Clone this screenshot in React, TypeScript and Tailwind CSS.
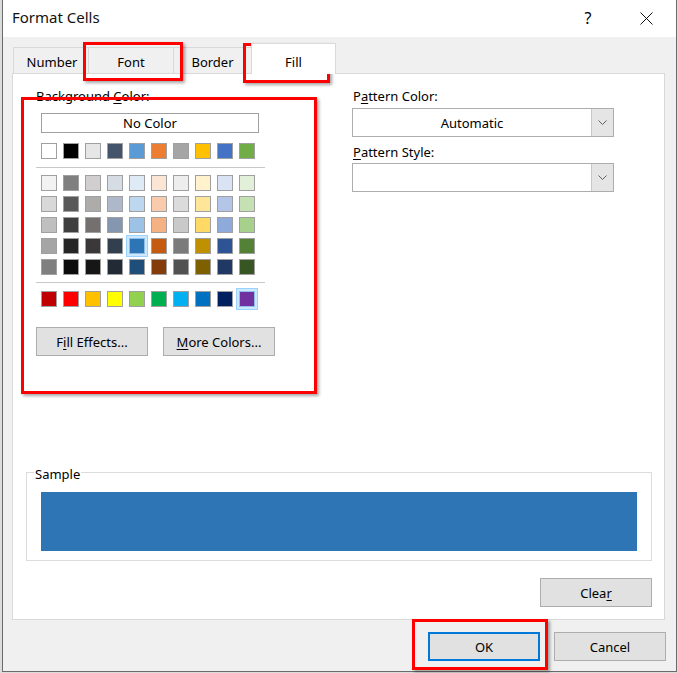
import React from 'react';

const themeRow = [
  'bg-[#ffffff]', 'bg-[#000000]', 'bg-[#e7e6e6]', 'bg-[#44546a]', 'bg-[#5b9bd5]',
  'bg-[#ed7d31]', 'bg-[#a5a5a5]', 'bg-[#ffc000]', 'bg-[#4472c4]', 'bg-[#70ad47]',
];

const tintRows = [
  ['bg-[#f2f2f2]', 'bg-[#7f7f7f]', 'bg-[#d0cece]', 'bg-[#d6dce4]', 'bg-[#deebf6]', 'bg-[#fbe5d5]', 'bg-[#ededed]', 'bg-[#fff2cc]', 'bg-[#dae3f3]', 'bg-[#e2efd9]'],
  ['bg-[#d8d8d8]', 'bg-[#595959]', 'bg-[#aeabab]', 'bg-[#adb9ca]', 'bg-[#bdd7ee]', 'bg-[#f7cbac]', 'bg-[#dbdbdb]', 'bg-[#fee599]', 'bg-[#b4c6e7]', 'bg-[#c5e0b3]'],
  ['bg-[#bfbfbf]', 'bg-[#3f3f3f]', 'bg-[#757070]', 'bg-[#8496b0]', 'bg-[#9cc3e5]', 'bg-[#f4b183]', 'bg-[#c9c9c9]', 'bg-[#ffd965]', 'bg-[#8eaadb]', 'bg-[#a8d08d]'],
  ['bg-[#a5a5a5]', 'bg-[#262626]', 'bg-[#3a3838]', 'bg-[#323f4f]', 'bg-[#2e75b5]', 'bg-[#c55a11]', 'bg-[#7b7b7b]', 'bg-[#bf9000]', 'bg-[#2f5496]', 'bg-[#538135]'],
  ['bg-[#7f7f7f]', 'bg-[#0c0c0c]', 'bg-[#171616]', 'bg-[#222a35]', 'bg-[#1e4e79]', 'bg-[#843c0b]', 'bg-[#525252]', 'bg-[#7f6000]', 'bg-[#1f3864]', 'bg-[#375623]'],
];

const standardRow = [
  'bg-[#c00000]', 'bg-[#ff0000]', 'bg-[#ffc000]', 'bg-[#ffff00]', 'bg-[#92d050]',
  'bg-[#00b050]', 'bg-[#00b0f0]', 'bg-[#0070c0]', 'bg-[#002060]', 'bg-[#7030a0]',
];

function Swatch({ color, highlight }: { color: string; highlight?: boolean }) {
  if (highlight) {
    return (
      <span className="relative block w-[16px] h-[16px]">
        <span className="absolute -inset-[3px] border border-[#99d1ff] bg-[#cce8ff]" />
        <span className={`relative block w-[16px] h-[16px] border border-[#8fbfe8] ${color}`} />
      </span>
    );
  }
  return <span className={`block w-[16px] h-[16px] border border-[#a0a0a0] ${color}`} />;
}

function SwatchRow({ colors, selected }: { colors: string[]; selected?: number }) {
  return (
    <div className="flex gap-[6px]">
      {colors.map((c, i) => (
        <Swatch key={i} color={c} highlight={i === selected} />
      ))}
    </div>
  );
}

function Combo({ value }: { value?: string }) {
  return (
    <div className="flex w-[262px] h-[29px] border border-[#adadad] bg-white">
      <div className="flex-1 flex items-center justify-center">{value}</div>
      <div className="w-[22px] flex items-center justify-center bg-[#e5e5e5] border-l border-[#c8c8c8]">
        <svg width="9" height="5" viewBox="0 0 9 5">
          <polyline points="0.5,0.5 4.5,4.5 8.5,0.5" fill="none" stroke="#606060" strokeWidth="1" />
        </svg>
      </div>
    </div>
  );
}

function Button({ children, primary }: { children: React.ReactNode; primary?: boolean }) {
  return (
    <div
      className={`w-[112px] h-[29px] flex items-center justify-center bg-[#e1e1e1] ${
        primary ? 'border-2 border-[#0078d7]' : 'border border-[#adadad]'
      }`}
    >
      {children}
    </div>
  );
}

function RedBox({ className }: { className: string }) {
  return (
    <div
      className={`absolute border-[3px] border-[#ff0000] shadow-[2px_2px_3px_rgba(0,0,0,0.35)] pointer-events-none ${className}`}
    />
  );
}

export default function App() {
  return (
    <div className="relative w-[678px] h-[673px] overflow-hidden bg-[#dcdcdc] font-['Noto_Sans',sans-serif] text-[13px] leading-[16px] text-black">
      <div className="ml-[2px] w-[675px] h-[672px] flex flex-col bg-[#f0f0f0] border-x border-b border-[#6b6b6b]">
        {/* title bar */}
        <div className="h-[37px] bg-white flex items-center pl-[9px] pr-[23px]">
          <span className="text-[15px] leading-[20px] mb-[3px] text-[#111]">Format Cells</span>
          <span className="ml-auto w-[20px] text-center text-[16px] leading-[20px] mb-[2px]">?</span>
          <span className="ml-[41px] w-[14px] h-[14px] flex items-center justify-center">
            <svg width="13" height="13" viewBox="0 0 13 13">
              <path d="M0.5 0.5 L12.5 12.5 M12.5 0.5 L0.5 12.5" stroke="#111" strokeWidth="1" />
            </svg>
          </span>
        </div>

        {/* tabs */}
        <div className="h-[36px] flex items-end pl-[10px]">
          <div className="w-[75px] h-[26px] flex items-center justify-center pt-[2px] pl-[2px] border-t border-l border-[#d9d9d9]">
            Number
          </div>
          <div className="w-[85px] h-[26px] flex items-center justify-center pt-[2px] border-t border-l border-[#d9d9d9]">
            Font
          </div>
          <div className="w-[78px] h-[26px] flex items-center justify-center pt-[2px] border-t border-l border-[#d9d9d9]">
            Border
          </div>
          <div className="relative z-10 -mb-px w-[85px] h-[31px] flex items-start justify-center pt-[10px] bg-white border-t border-x border-[#d9d9d9]">
            Fill
          </div>
        </div>

        {/* tab panel */}
        <div className="ml-[9px] w-[653px] h-[547px] flex flex-col bg-white border border-[#d9d9d9]">
          <div className="flex">
            <div className="w-[339px] pl-[23px] pt-[14px] flex flex-col">
              <div>
                Background <u className="underline-offset-2">C</u>olor:
              </div>
              <div className="ml-[5px] mt-[9px] w-[218px] h-[20px] flex items-center justify-center border border-[#a0a0a0]">
                No Color
              </div>
              <div className="ml-[5px] mt-[10px]">
                <SwatchRow colors={themeRow} />
              </div>
              <div className="mt-[8px] w-[229px] h-px bg-[#c8c8c8]" />
              <div className="ml-[5px] mt-[7px] flex flex-col gap-[5px]">
                {tintRows.map((row, i) => (
                  <SwatchRow key={i} colors={row} selected={i === 3 ? 4 : undefined} />
                ))}
              </div>
              <div className="mt-[7px] w-[229px] h-px bg-[#c8c8c8]" />
              <div className="ml-[5px] mt-[8px]">
                <SwatchRow colors={standardRow} selected={9} />
              </div>
              <div className="mt-[20px] flex gap-[15px]">
                <Button>
                  <span>
                    F<u className="underline-offset-2">i</u>ll Effects...
                  </span>
                </Button>
                <Button>
                  <span>
                    <u className="underline-offset-2">M</u>ore Colors...
                  </span>
                </Button>
              </div>
            </div>

            <div className="pt-[14px] flex flex-col">
              <div className="pl-px">
                P<u className="underline-offset-2">a</u>ttern Color:
              </div>
              <div className="mt-[4px]">
                <Combo value="Automatic" />
              </div>
              <div className="mt-[7px] pl-px">
                <u className="underline-offset-2">P</u>attern Style:
              </div>
              <div className="mt-[3px]">
                <Combo />
              </div>
            </div>
          </div>

          {/* sample */}
          <div className="relative ml-[13px] mt-[116px] w-[626px] h-[89px] border border-[#dcdcdc] px-[14px] pt-[19px]">
            <span className="absolute left-[7px] -top-[7px] bg-white px-px">Sample</span>
            <div className="w-[596px] h-[59px] bg-[#2e75b6]" />
          </div>

          <div className="ml-[527px] mt-[17px]">
            <Button>
              <span>
                Clea<u className="underline-offset-2">r</u>
              </span>
            </Button>
          </div>
        </div>

        {/* dialog buttons */}
        <div className="mt-[12px] ml-[425px] flex gap-[14px]">
          <Button primary>OK</Button>
          <Button>Cancel</Button>
        </div>
      </div>

      {/* annotation boxes */}
      <RedBox className="left-[83px] top-[42px] w-[100px] h-[39px]" />
      <RedBox className="left-[243px] top-[43px] w-[87px] h-[40px]" />
      <RedBox className="left-[21px] top-[97px] w-[296px] h-[297px]" />
      <RedBox className="left-[412px] top-[619px] w-[136px] h-[51px]" />
    </div>
  );
}
